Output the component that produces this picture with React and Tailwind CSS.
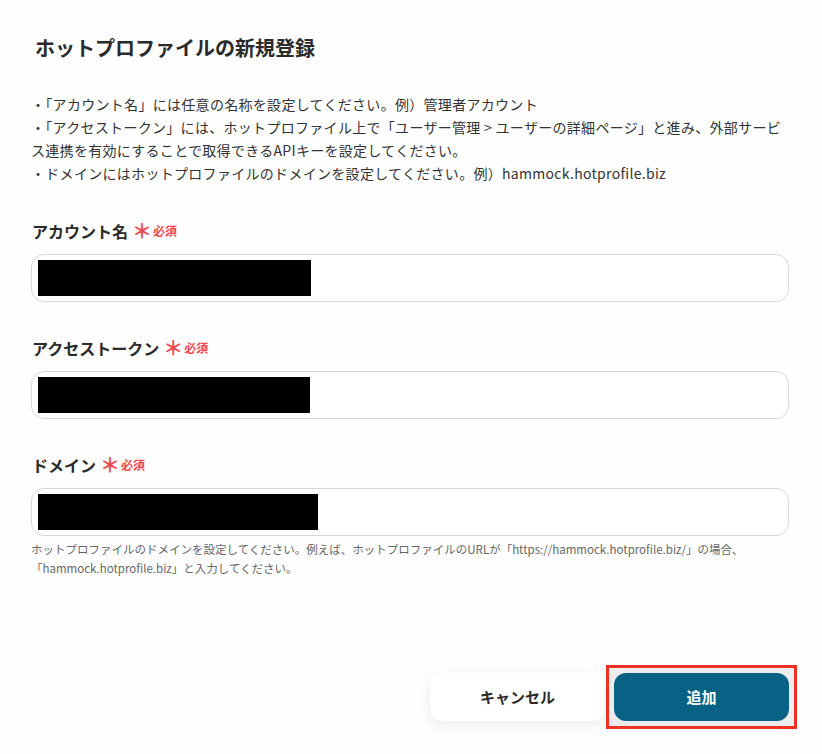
export default function App() {
  const font = { fontFamily: '"Noto Sans CJK JP", "Noto Sans", sans-serif' };

  return (
    <div
      className="w-[822px] h-[754px] bg-[#fefefe] text-[#333333] relative overflow-hidden"
      style={font}
    >
      <div className="pl-[31px] pr-[33px]">
        <h1 className="pt-[32px] pl-[4px] text-[20px] leading-[32px] font-bold text-[#2a2a2a]">
          ホットプロファイルの新規登録
        </h1>

        <div className="mt-[29px] text-[14px] leading-[23px] tracking-[0.3px] text-[#333333]">
          <p>・「アカウント名」には任意の名称を設定してください。例）管理者アカウント</p>
          <p>
            ・「アクセストークン」には、ホットプロファイル上で「ユーザー管理 &gt; ユーザーの詳細ページ」と進み、外部サービス連携を有効にすることで取得できるAPIキーを設定してください。
          </p>
          <p>・ドメインにはホットプロファイルのドメインを設定してください。例）hammock.hotprofile.biz</p>
        </div>

        <Field label="アカウント名" top="mt-[34px]" redact="w-[273px]" />
        <Field label="アクセストークン" top="mt-[34px]" redact="w-[272px]" />
        <Field label="ドメイン" top="mt-[34px]" redact="w-[280px]" />

        <p className="mt-[4px] text-[11.5px] leading-[19px] text-[#666666]">
          ホットプロファイルのドメインを設定してください。例えば、ホットプロファイルのURLが「https://hammock.hotprofile.biz/」の場合、
          <br />
          「hammock.hotprofile.biz」と入力してください。
        </p>

        <div className="mt-[87px] flex justify-end items-center gap-[1px]">
          <button className="w-[175px] h-[48px] rounded-[12px] bg-white shadow-[0_4px_14px_rgba(0,0,0,0.08)] text-[15px] font-bold text-[#2a2a2a]">
            キャンセル
          </button>
          <div className="border-[3px] border-[#ee3124] bg-[#ececec] p-[5px] -mr-[8px]">
            <button className="w-[175px] h-[48px] rounded-[12px] bg-[#086286] text-[15px] font-bold text-white">
              追加
            </button>
          </div>
        </div>
      </div>
    </div>
  );
}

function Field({ label, top, redact }) {
  return (
    <div className={top}>
      <div className="flex items-center pl-[1px]">
        <span className="text-[16px] leading-[24px] font-bold text-[#2a2a2a]">{label}</span>
        <span className="ml-[4px] text-[20px] leading-[20px] font-bold text-[#f0464e]">＊</span>
        <span className="ml-[1px] text-[12px] font-bold text-[#f0464e]">必須</span>
      </div>
      <div className="mt-[11px] h-[48px] rounded-[13px] border border-[#d3d8e2] bg-white pl-[6px] py-[5px]">
        <div className={`${redact} h-[36px] bg-black`} />
      </div>
    </div>
  );
}
